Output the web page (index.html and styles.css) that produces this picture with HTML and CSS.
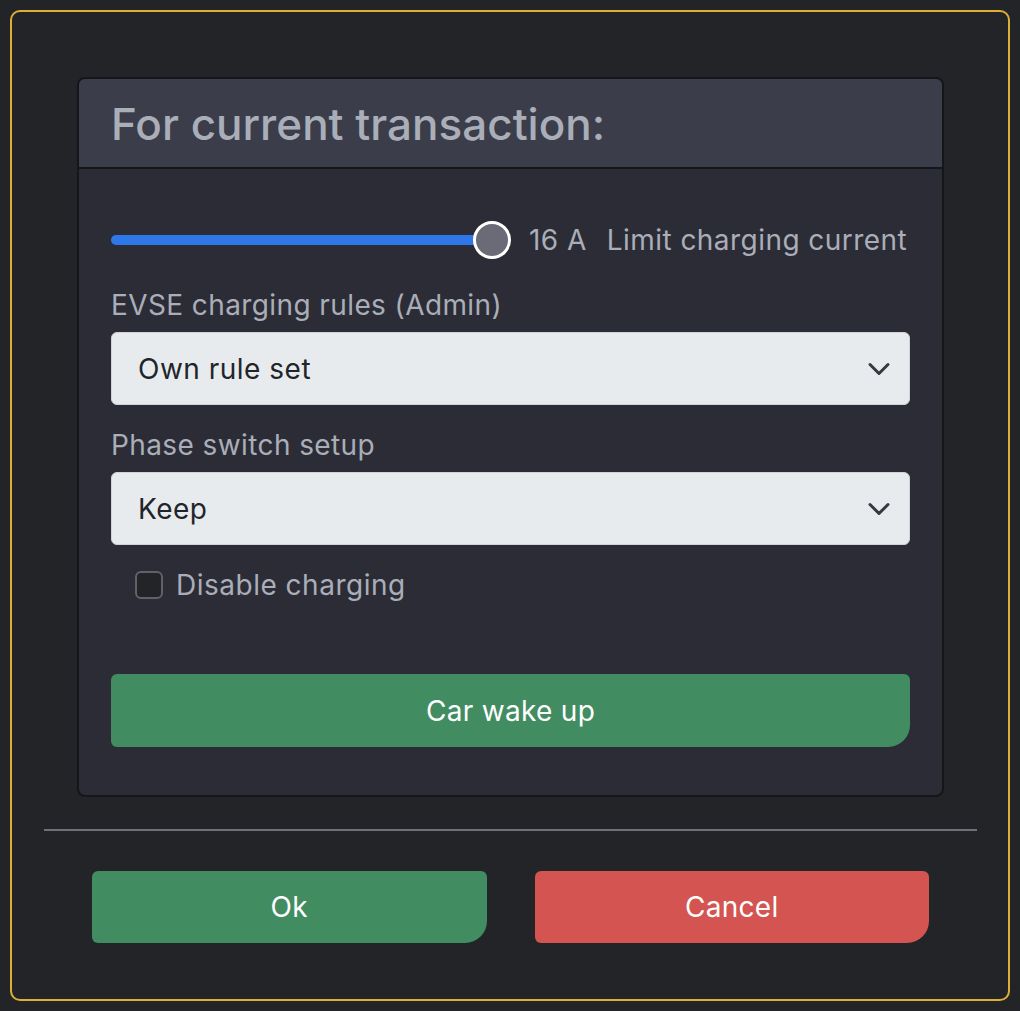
FILE: index.html
```html
<!DOCTYPE html>
<html lang="en">
<head>
    <meta charset="UTF-8">
    <meta name="viewport" content="width=device-width, initial-scale=1.0">
    <title>Charging settings</title>
    <link rel="stylesheet" href="styles.css">
</head>
<body>
    <div class="dialog">
        <div class="card">
            <div class="card-header">For current transaction:</div>
            <div class="card-body">
                <div class="slider-row">
                    <input class="range" type="range" min="6" max="16" value="16">
                    <span class="amps">16 A</span>
                    <span class="slider-label">Limit charging current</span>
                </div>

                <label class="field-label">EVSE charging rules (Admin)</label>
                <div class="select">
                    <span>Own rule set</span>
                    <svg class="chevron" viewBox="0 0 16 16" width="24" height="24">
                        <path d="M2 5l6 6 6-6" fill="none" stroke="#343a40" stroke-width="2" stroke-linecap="round" stroke-linejoin="round"/>
                    </svg>
                </div>

                <label class="field-label">Phase switch setup</label>
                <div class="select">
                    <span>Keep</span>
                    <svg class="chevron" viewBox="0 0 16 16" width="24" height="24">
                        <path d="M2 5l6 6 6-6" fill="none" stroke="#343a40" stroke-width="2" stroke-linecap="round" stroke-linejoin="round"/>
                    </svg>
                </div>

                <label class="check">
                    <span class="box"></span>
                    Disable charging
                </label>

                <button class="btn btn-green btn-wide">Car wake up</button>
            </div>
        </div>

        <hr class="divider">

        <div class="actions">
            <button class="btn btn-green">Ok</button>
            <button class="btn btn-red">Cancel</button>
        </div>
    </div>
</body>
</html>
```

FILE: styles.css
```css
/* Dark dialog */
body {
    margin: 0;
    padding: 10px;
    background-color: #222428;
    font-family: Inter, 'Noto Sans', sans-serif;
    color: #a9aeb8;
}

.dialog {
    border: 2px solid #dcb034;
    border-radius: 10px;
    height: 991px;
    box-sizing: border-box;
    padding: 65px 0 0;
}

.card {
    margin: 0 64px 0 65px;
    background: #2c2c36;
    border: 2px solid #15161a;
    border-radius: 8px;
    overflow: hidden;
}

.card-header {
    background: #3b3d4a;
    border-bottom: 2px solid #15161a;
    height: 88px;
    padding: 0 32px;
    font-size: 44px;
    line-height: 90px;
    font-weight: 500;
    color: #a9aeb8;
}

.card-body {
    padding: 51px 32px 48px;
}

/* Slider */
.slider-row {
    display: flex;
    align-items: center;
    height: 40px;
    font-size: 28px;
    letter-spacing: 0.45px;
    margin-bottom: 27px;
}

.range {
    -webkit-appearance: none;
    appearance: none;
    width: 400px;
    height: 40px;
    margin: 0 18px 0 0;
    background: transparent;
}

.range::-webkit-slider-runnable-track {
    height: 10px;
    border-radius: 5px;
    background: #2f78ec;
}

.range::-webkit-slider-thumb {
    -webkit-appearance: none;
    width: 38px;
    height: 38px;
    margin-top: -14px;
    border-radius: 50%;
    background: #6b6b78;
    border: 3px solid #fff;
    box-sizing: border-box;
}

.amps {
    margin-right: 20px;
}

/* Selects */
.field-label {
    display: block;
    font-size: 28px;
    letter-spacing: 0.4px;
    line-height: 36px;
    margin-bottom: 9px;
}

.select {
    height: 73px;
    box-sizing: border-box;
    background: #e8ebee;
    border: 1px solid #ced4da;
    border-radius: 6px;
    padding: 0 18px 0 26px;
    display: flex;
    align-items: center;
    justify-content: space-between;
    font-size: 28px;
    letter-spacing: 0.5px;
    color: #212529;
    margin-bottom: 22px;
}

/* Checkbox */
.check {
    display: flex;
    align-items: center;
    gap: 13px;
    font-size: 28px;
    letter-spacing: 0.5px;
    margin: -2px 0 0 24px;
    height: 40px;
}

.box {
    width: 28px;
    height: 28px;
    box-sizing: border-box;
    border: 2px solid #5e626b;
    border-radius: 6px;
    background: #222428;
}

/* Buttons */
.btn {
    border: none;
    font-family: inherit;
    font-size: 28px;
    letter-spacing: 0.3px;
    color: #fff;
    height: 73px;
    border-radius: 6px 6px 22px 6px;
    cursor: pointer;
}

.btn-green {
    background: #428c62;
}

.btn-red {
    background: #d35450;
}

.btn-wide {
    display: block;
    width: 100%;
    margin-top: 69px;
}

.divider {
    border: none;
    border-top: 2px solid #6c7077;
    margin: 32px 31px 0 32px;
}

.actions {
    display: flex;
    gap: 48px;
    padding: 40px 79px 0 80px;
}

.actions .btn {
    flex: 1;
    height: 72px;
}
```
